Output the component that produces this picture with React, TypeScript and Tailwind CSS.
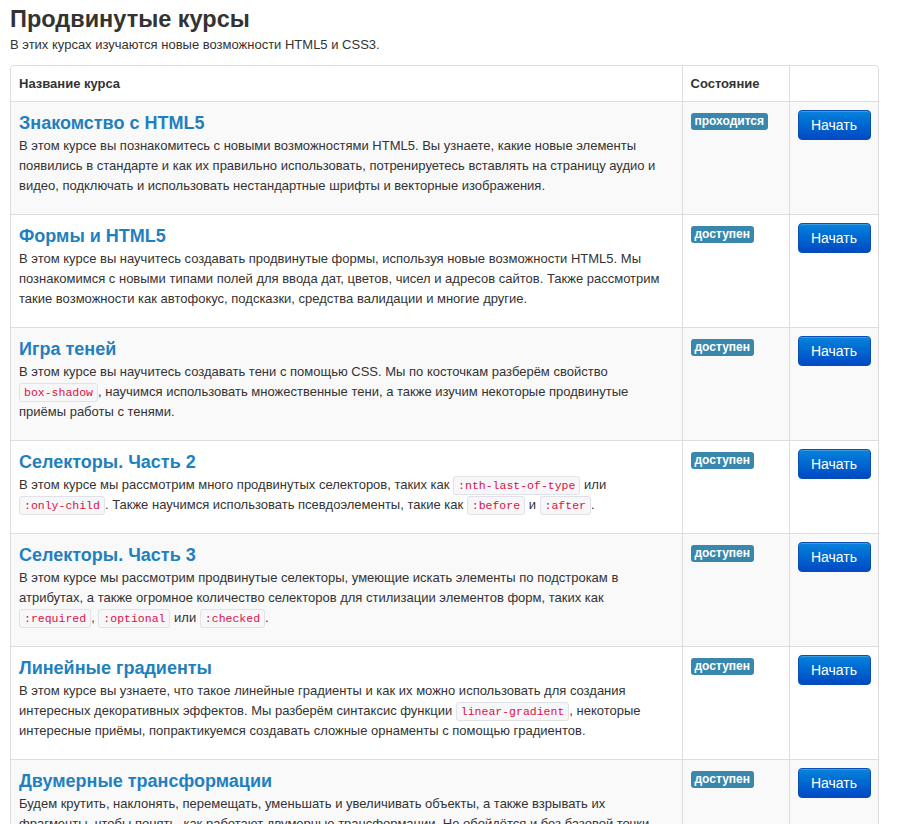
import React from "react";

type Course = {
  title: string;
  status: "проходится" | "доступен";
  body: React.ReactNode;
};

const C = ({ children }: { children: React.ReactNode }) => (
  <code className="whitespace-nowrap rounded-[3px] border border-[#e1e1e8] bg-[#f7f7f9] px-[4px] py-[2px] font-['Liberation_Mono',monospace] text-[11.5px] leading-none text-[#d14]">
    {children}
  </code>
);

const courses: Course[] = [
  {
    title: "Знакомство с HTML5",
    status: "проходится",
    body: (
      <>
        В этом курсе вы познакомитесь с новыми возможностями HTML5. Вы узнаете, какие новые элементы появились в
        стандарте и как их правильно использовать, потренируетесь вставлять на страницу аудио и видео, подключать и
        использовать нестандартные шрифты и векторные изображения.
      </>
    ),
  },
  {
    title: "Формы и HTML5",
    status: "доступен",
    body: (
      <>
        В этом курсе вы научитесь создавать продвинутые формы, используя новые возможности HTML5. Мы познакомимся с
        новыми типами полей для ввода дат, цветов, чисел и адресов сайтов. Также рассмотрим такие возможности как
        автофокус, подсказки, средства валидации и многие другие.
      </>
    ),
  },
  {
    title: "Игра теней",
    status: "доступен",
    body: (
      <>
        В этом курсе вы научитесь создавать тени с помощью CSS. Мы по косточкам разберём свойство <C>box-shadow</C>,
        научимся использовать множественные тени, а также изучим некоторые продвинутые приёмы работы с тенями.
      </>
    ),
  },
  {
    title: "Селекторы. Часть 2",
    status: "доступен",
    body: (
      <>
        В этом курсе мы рассмотрим много продвинутых селекторов, таких как <C>:nth-last-of-type</C> или{" "}
        <C>:only-child</C>. Также научимся использовать псевдоэлементы, такие как <C>:before</C> и <C>:after</C>.
      </>
    ),
  },
  {
    title: "Селекторы. Часть 3",
    status: "доступен",
    body: (
      <>
        В этом курсе мы рассмотрим продвинутые селекторы, умеющие искать элементы по подстрокам в атрибутах, а также
        огромное количество селекторов для стилизации элементов форм, таких как <C>:required</C>, <C>:optional</C> или{" "}
        <C>:checked</C>.
      </>
    ),
  },
  {
    title: "Линейные градиенты",
    status: "доступен",
    body: (
      <>
        В этом курсе вы узнаете, что такое линейные градиенты и как их можно использовать для создания интересных
        декоративных эффектов. Мы разберём синтаксис функции <C>linear-gradient</C>, некоторые интересные приёмы,
        попрактикуемся создавать сложные орнаменты с помощью градиентов.
      </>
    ),
  },
  {
    title: "Двумерные трансформации",
    status: "доступен",
    body: (
      <>
        Будем крутить, наклонять, перемещать, уменьшать и увеличивать объекты, а также взрывать их фрагменты, чтобы
        понять, как работают двумерные трансформации. Не обойдётся и без базовой точки трансформации.
      </>
    ),
  },
];

export default function App() {
  return (
    <div className="bg-white pb-[20px] pl-[10px] font-['Liberation_Sans',Arial,sans-serif] text-[13px] leading-[20px] text-[#333]">
      <h1 className="pt-[4px] text-[23.5px] font-bold leading-[30px] text-[#333]">Продвинутые курсы</h1>
      <p className="mt-[1px]">В этих курсах изучаются новые возможности HTML5 и CSS3.</p>
      <div className="mt-[10px] w-[869px] overflow-hidden rounded-[4px] border border-[#ddd]">
        <table className="w-full table-fixed border-collapse">
          <colgroup>
            <col className="w-[671px]" />
            <col className="w-[107px]" />
            <col />
          </colgroup>
          <thead>
            <tr>
              <th className="px-[8px] py-[8px] text-left text-[13px] font-bold leading-[19px]">Название курса</th>
              <th className="border-l border-[#ddd] px-[8px] py-[8px] text-left text-[13px] font-bold leading-[19px]">
                Состояние
              </th>
              <th className="border-l border-[#ddd]" />
            </tr>
          </thead>
          <tbody>
            {courses.map((c, i) => (
              <tr key={c.title} className={i % 2 === 0 ? "bg-[#f9f9f9]" : "bg-white"}>
                <td className="border-t border-[#ddd] px-[8px] pt-[8px] pb-[8px] align-top">
                  <h4 className="text-[18px] font-bold leading-[26px] text-[#1f80c0]">{c.title}</h4>
                  <p className="mb-[10px]">{c.body}</p>
                </td>
                <td className="border-t border-l border-[#ddd] px-[8px] pt-[9px] align-top">
                  <span className="inline-block rounded-[3px] bg-[#3a87ad] px-[4px] text-[12px] font-bold leading-[17px] text-white">
                    {c.status}
                  </span>
                </td>
                <td className="border-t border-l border-[#ddd] px-[8px] pt-[8px] align-top">
                  <button className="h-[30px] w-[73px] rounded-[4px] border border-[#0a4fb0] bg-gradient-to-b from-[#0a83dc] to-[#0348c4] text-[14px] leading-[20px] text-white shadow-[inset_0_1px_0_rgba(255,255,255,0.2)]">
                    Начать
                  </button>
                </td>
              </tr>
            ))}
          </tbody>
        </table>
      </div>
    </div>
  );
}
